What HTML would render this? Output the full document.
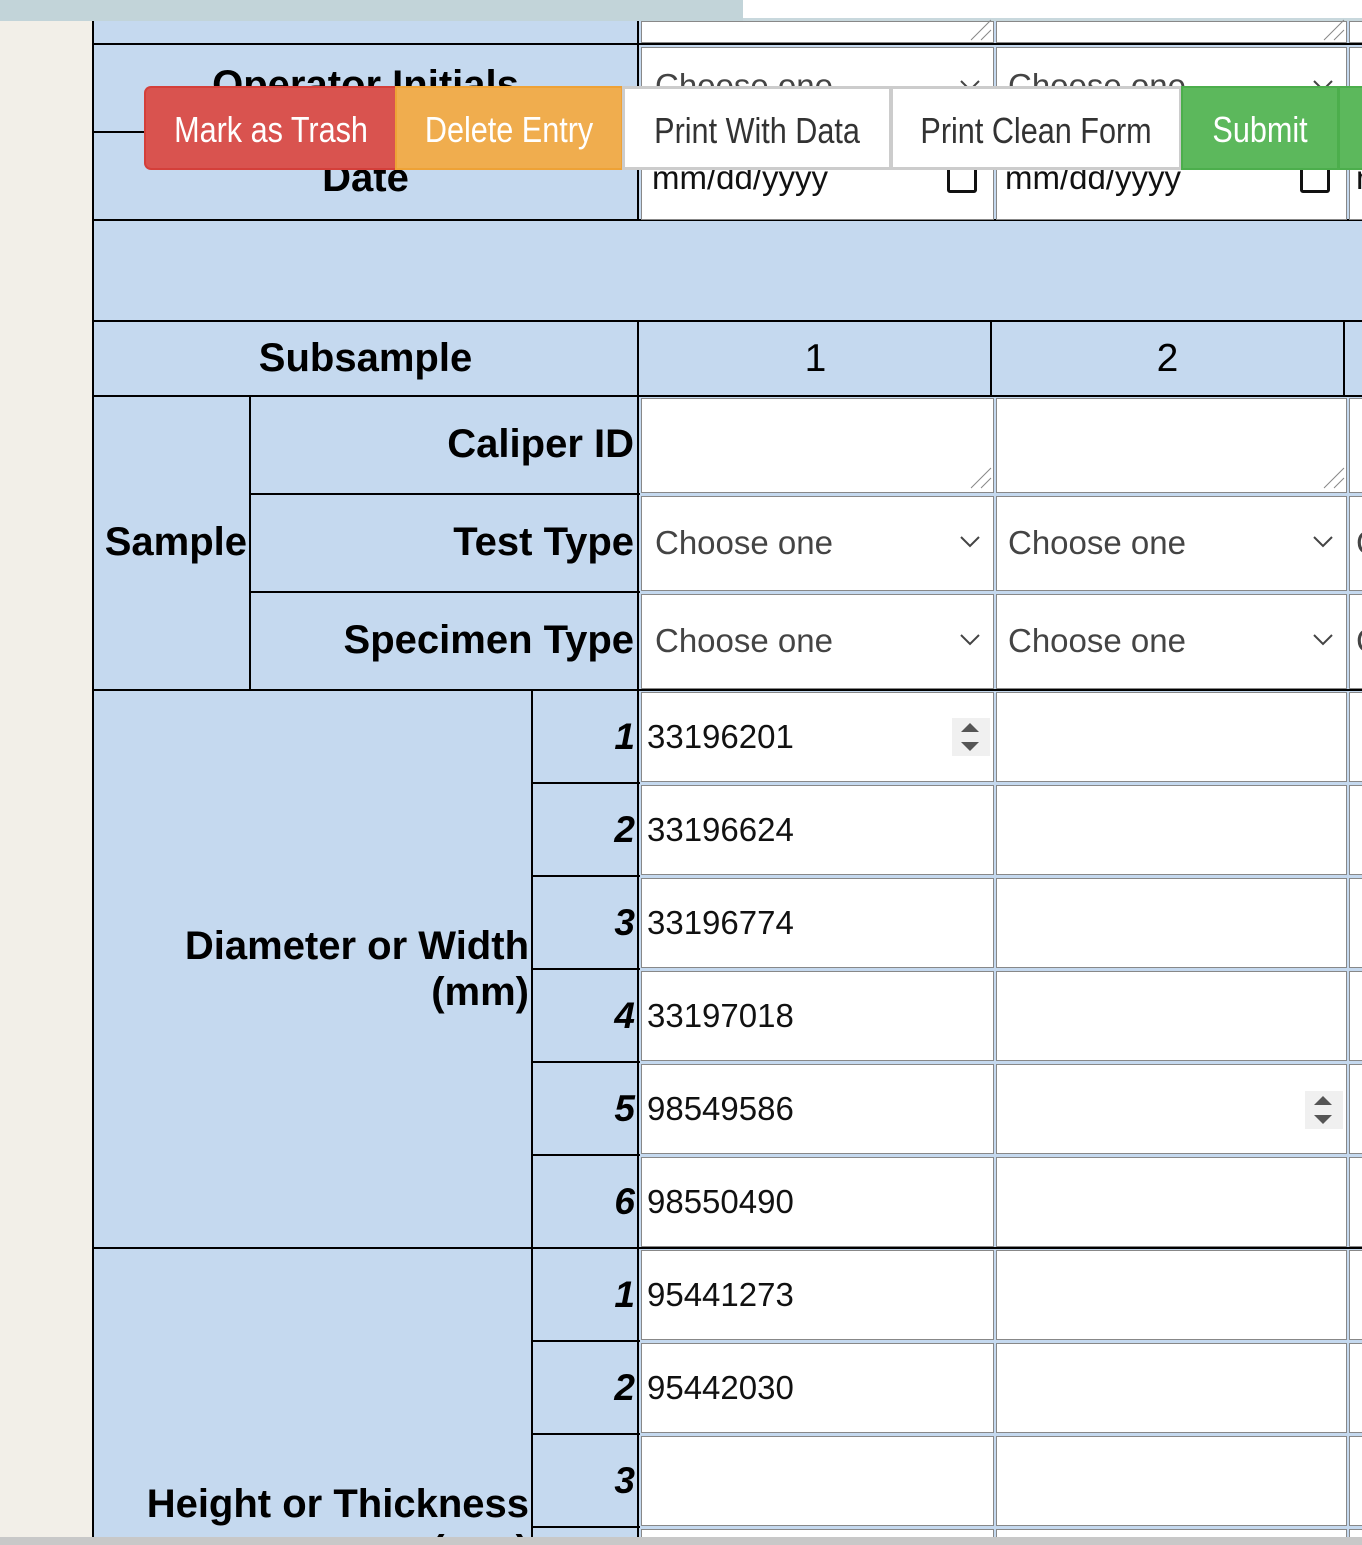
<!DOCTYPE html>
<html><head><meta charset="utf-8">
<style>
*{margin:0;padding:0;box-sizing:border-box}
html,body{width:1362px;height:1545px;overflow:hidden;background:#f2efe8;font-family:"Liberation Sans",Arial,sans-serif;position:relative}
.a{position:absolute}
.h{position:absolute;height:2px;background:#000}
.v{position:absolute;width:2px;background:#000}
.lb{position:absolute;font-weight:bold;font-size:40px;color:#000;white-space:nowrap;line-height:47px}
.box{position:absolute;background:#fff;border:1px solid #888}
.val{position:absolute;font-size:33px;color:#111;white-space:nowrap;line-height:40px}
.ch{position:absolute;font-size:33px;color:#444;white-space:nowrap;line-height:40px}
.num{position:absolute;font-weight:bold;font-style:italic;font-size:37px;line-height:44px;text-align:right;width:100px}
.btn{position:absolute;top:86px;height:84px;font-size:36px;line-height:84px;text-align:center;white-space:nowrap;overflow:hidden}
.btn span{display:inline-block;transform:scaleX(0.85);transform-origin:center}
</style></head><body>
<div class="a" style="left:0;top:0;width:743px;height:21px;background:#c2d4d9"></div>
<div class="a" style="left:743px;top:0;width:619px;height:18px;background:#fff"></div>
<div class="a" style="left:743px;top:18px;width:619px;height:4px;background:#c8d8dd"></div>
<div class="a" style="left:93px;top:21px;width:1269px;height:1516px;background:#c5d9ef"></div>
<div class="v" style="left:92px;top:21px;height:1516px"></div>

<div class="h" style="left:93px;top:43px;width:1269px"></div>
<div class="h" style="left:93px;top:131px;width:60px"></div>
<div class="h" style="left:93px;top:219px;width:1269px"></div>
<div class="h" style="left:93px;top:320px;width:1269px"></div>
<div class="h" style="left:93px;top:395px;width:1269px"></div>
<div class="h" style="left:250px;top:493px;width:390px"></div>
<div class="h" style="left:250px;top:591px;width:390px"></div>
<div class="h" style="left:93px;top:689px;width:1269px"></div>
<div class="h" style="left:532px;top:782px;width:108px"></div>
<div class="h" style="left:532px;top:875px;width:108px"></div>
<div class="h" style="left:532px;top:968px;width:108px"></div>
<div class="h" style="left:532px;top:1061px;width:108px"></div>
<div class="h" style="left:532px;top:1154px;width:108px"></div>
<div class="h" style="left:93px;top:1247px;width:1269px"></div>
<div class="h" style="left:532px;top:1340px;width:108px"></div>
<div class="h" style="left:532px;top:1433px;width:108px"></div>
<div class="h" style="left:532px;top:1526px;width:108px"></div>
<div class="v" style="left:637px;top:21px;height:200px"></div>
<div class="v" style="left:637px;top:320px;height:1217px"></div>
<div class="v" style="left:249px;top:395px;height:295px"></div>
<div class="v" style="left:531px;top:689px;height:848px"></div>
<div class="v" style="left:990px;top:320px;height:76px"></div>
<div class="v" style="left:1343px;top:320px;height:76px"></div>

<div class="lb" style="left:93px;width:545px;top:62px;text-align:center">Operator Initials</div>
<div class="lb" style="left:93px;width:545px;top:155px;text-align:center">Date</div>
<div class="lb" style="left:93px;width:545px;top:335px;text-align:center">Subsample</div>
<div class="a" style="left:640px;width:351px;top:336px;font-size:39px;line-height:46px;text-align:center">1</div>
<div class="a" style="left:992px;width:351px;top:336px;font-size:39px;line-height:46px;text-align:center">2</div>
<div class="lb" style="left:250px;width:384px;top:421px;text-align:right">Caliper ID</div>
<div class="lb" style="left:250px;width:384px;top:519px;text-align:right">Test Type</div>
<div class="lb" style="left:250px;width:384px;top:617px;text-align:right">Specimen Type</div>
<div class="lb" style="left:93px;width:154px;top:519px;text-align:right">Sample</div>
<div class="lb" style="left:93px;width:436px;top:923px;text-align:right;line-height:46px">Diameter or Width<br>(mm)</div>
<div class="lb" style="left:93px;width:436px;top:1481px;text-align:right;line-height:46px">Height or Thickness<br>(mm)</div>

<div class="num" style="left:535px;top:715px">1</div>
<div class="num" style="left:535px;top:808px">2</div>
<div class="num" style="left:535px;top:901px">3</div>
<div class="num" style="left:535px;top:994px">4</div>
<div class="num" style="left:535px;top:1087px">5</div>
<div class="num" style="left:535px;top:1180px">6</div>
<div class="num" style="left:535px;top:1273px">1</div>
<div class="num" style="left:535px;top:1366px">2</div>
<div class="num" style="left:535px;top:1459px">3</div>

<div class="box" style="left:641px;top:21px;width:353px;height:22px"></div>
<div class="box" style="left:996px;top:21px;width:351px;height:22px"></div>
<div class="box" style="left:1349px;top:21px;width:20px;height:22px"></div>
<div class="box" style="left:641px;top:47px;width:353px;height:85px"></div>
<div class="box" style="left:996px;top:47px;width:351px;height:85px"></div>
<div class="box" style="left:1349px;top:47px;width:20px;height:85px"></div>
<div class="ch" style="left:655px;top:66px">Choose one</div>
<div class="ch" style="left:1008px;top:66px">Choose one</div>
<div class="box" style="left:641px;top:134px;width:353px;height:86px"></div>
<div class="box" style="left:996px;top:134px;width:351px;height:86px"></div>
<div class="box" style="left:1349px;top:134px;width:20px;height:86px"></div>
<div class="val" style="left:652px;top:158px">mm/dd/yyyy</div>
<div class="val" style="left:1005px;top:158px">mm/dd/yyyy</div>
<div class="val" style="left:1356px;top:158px">m</div>
<div class="a" style="left:947px;top:163px;width:30px;height:30px;border:3px solid #111;border-radius:3px"></div>
<div class="a" style="left:1300px;top:163px;width:30px;height:30px;border:3px solid #111;border-radius:3px"></div>

<div class="box" style="left:641px;top:398px;width:353px;height:95px"></div>
<div class="box" style="left:996px;top:398px;width:351px;height:95px"></div>
<div class="box" style="left:1349px;top:398px;width:20px;height:95px"></div>
<div class="box" style="left:641px;top:496px;width:353px;height:95px"></div>
<div class="box" style="left:996px;top:496px;width:351px;height:95px"></div>
<div class="box" style="left:1349px;top:496px;width:20px;height:95px"></div>
<div class="box" style="left:641px;top:594px;width:353px;height:95px"></div>
<div class="box" style="left:996px;top:594px;width:351px;height:95px"></div>
<div class="box" style="left:1349px;top:594px;width:20px;height:95px"></div>
<div class="ch" style="left:655px;top:523px">Choose one</div>
<div class="ch" style="left:1008px;top:523px">Choose one</div>
<div class="ch" style="left:1356px;top:523px">C</div>
<div class="ch" style="left:655px;top:621px">Choose one</div>
<div class="ch" style="left:1008px;top:621px">Choose one</div>
<div class="ch" style="left:1356px;top:621px">C</div>
<svg class="a" style="left:0;top:0" width="1362" height="1545">
<g fill="none" stroke="#444" stroke-width="2">
<path d="M961 537 L970 546 L979 537"/><path d="M1314 537 L1323 546 L1332 537"/>
<path d="M961 635 L970 644 L979 635"/><path d="M1314 635 L1323 644 L1332 635"/>
<path d="M961 81 L970 90 L979 81"/><path d="M1314 81 L1323 90 L1332 81"/>
</g>
<g stroke="#888" stroke-width="1">
<path d="M971 488 L991 468 M981 488 L991 478"/><path d="M1324 488 L1344 468 M1334 488 L1344 478"/>
<path d="M971 40 L991 20 M981 40 L991 30"/><path d="M1324 40 L1344 20 M1334 40 L1344 30"/>
</g>
</svg>

<div class="box" style="left:641px;top:692px;width:353px;height:90px"></div><div class="box" style="left:996px;top:692px;width:351px;height:90px"></div><div class="box" style="left:1349px;top:692px;width:20px;height:90px"></div>
<div class="box" style="left:641px;top:785px;width:353px;height:90px"></div><div class="box" style="left:996px;top:785px;width:351px;height:90px"></div><div class="box" style="left:1349px;top:785px;width:20px;height:90px"></div>
<div class="box" style="left:641px;top:878px;width:353px;height:90px"></div><div class="box" style="left:996px;top:878px;width:351px;height:90px"></div><div class="box" style="left:1349px;top:878px;width:20px;height:90px"></div>
<div class="box" style="left:641px;top:971px;width:353px;height:90px"></div><div class="box" style="left:996px;top:971px;width:351px;height:90px"></div><div class="box" style="left:1349px;top:971px;width:20px;height:90px"></div>
<div class="box" style="left:641px;top:1064px;width:353px;height:90px"></div><div class="box" style="left:996px;top:1064px;width:351px;height:90px"></div><div class="box" style="left:1349px;top:1064px;width:20px;height:90px"></div>
<div class="box" style="left:641px;top:1157px;width:353px;height:90px"></div><div class="box" style="left:996px;top:1157px;width:351px;height:90px"></div><div class="box" style="left:1349px;top:1157px;width:20px;height:90px"></div>
<div class="box" style="left:641px;top:1250px;width:353px;height:90px"></div><div class="box" style="left:996px;top:1250px;width:351px;height:90px"></div><div class="box" style="left:1349px;top:1250px;width:20px;height:90px"></div>
<div class="box" style="left:641px;top:1343px;width:353px;height:90px"></div><div class="box" style="left:996px;top:1343px;width:351px;height:90px"></div><div class="box" style="left:1349px;top:1343px;width:20px;height:90px"></div>
<div class="box" style="left:641px;top:1436px;width:353px;height:90px"></div><div class="box" style="left:996px;top:1436px;width:351px;height:90px"></div><div class="box" style="left:1349px;top:1436px;width:20px;height:90px"></div>
<div class="box" style="left:641px;top:1529px;width:353px;height:40px"></div><div class="box" style="left:996px;top:1529px;width:351px;height:40px"></div><div class="box" style="left:1349px;top:1529px;width:20px;height:40px"></div>

<div class="val" style="left:647px;top:717px">33196201</div>
<div class="val" style="left:647px;top:810px">33196624</div>
<div class="val" style="left:647px;top:903px">33196774</div>
<div class="val" style="left:647px;top:996px">33197018</div>
<div class="val" style="left:647px;top:1089px">98549586</div>
<div class="val" style="left:647px;top:1182px">98550490</div>
<div class="val" style="left:647px;top:1275px">95441273</div>
<div class="val" style="left:647px;top:1368px">95442030</div>

<div class="a" style="left:952px;top:718px;width:38px;height:38px;background:#f0f0f0"></div>
<div class="a" style="left:1305px;top:1091px;width:38px;height:38px;background:#f0f0f0"></div>
<svg class="a" style="left:0;top:0" width="1362" height="1545"><g fill="#555">
<path d="M961 732 L970 723 L979 732Z M961 742 L970 751 L979 742Z"/>
<path d="M1314 1105 L1323 1096 L1332 1105Z M1314 1115 L1323 1124 L1332 1115Z"/>
</g></svg>

<div class="btn" style="left:144px;width:252px;background:#d9534f;border:2px solid #d43f3a;border-right:none;border-radius:7px 0 0 7px;color:#fff"><span>Mark as Trash</span></div>
<div class="btn" style="left:395px;width:228px;background:#f0ad4e;border:2px solid #eea236;color:#fff"><span>Delete Entry</span></div>
<div class="btn" style="left:622px;width:270px;background:#fff;border:3px solid #ccc;color:#333"><span>Print With Data</span></div>
<div class="btn" style="left:890px;width:292px;background:#fff;border:3px solid #ccc;color:#333"><span>Print Clean Form</span></div>
<div class="btn" style="left:1181px;width:158px;background:#5cb85c;border:2px solid #4cae4c;color:#fff"><span>Submit</span></div>
<div class="btn" style="left:1338px;width:30px;background:#5cb85c;border:2px solid #4cae4c"></div>

<div class="a" style="left:0;top:1537px;width:1362px;height:8px;background:#c8c8c8"></div>
</body></html>
